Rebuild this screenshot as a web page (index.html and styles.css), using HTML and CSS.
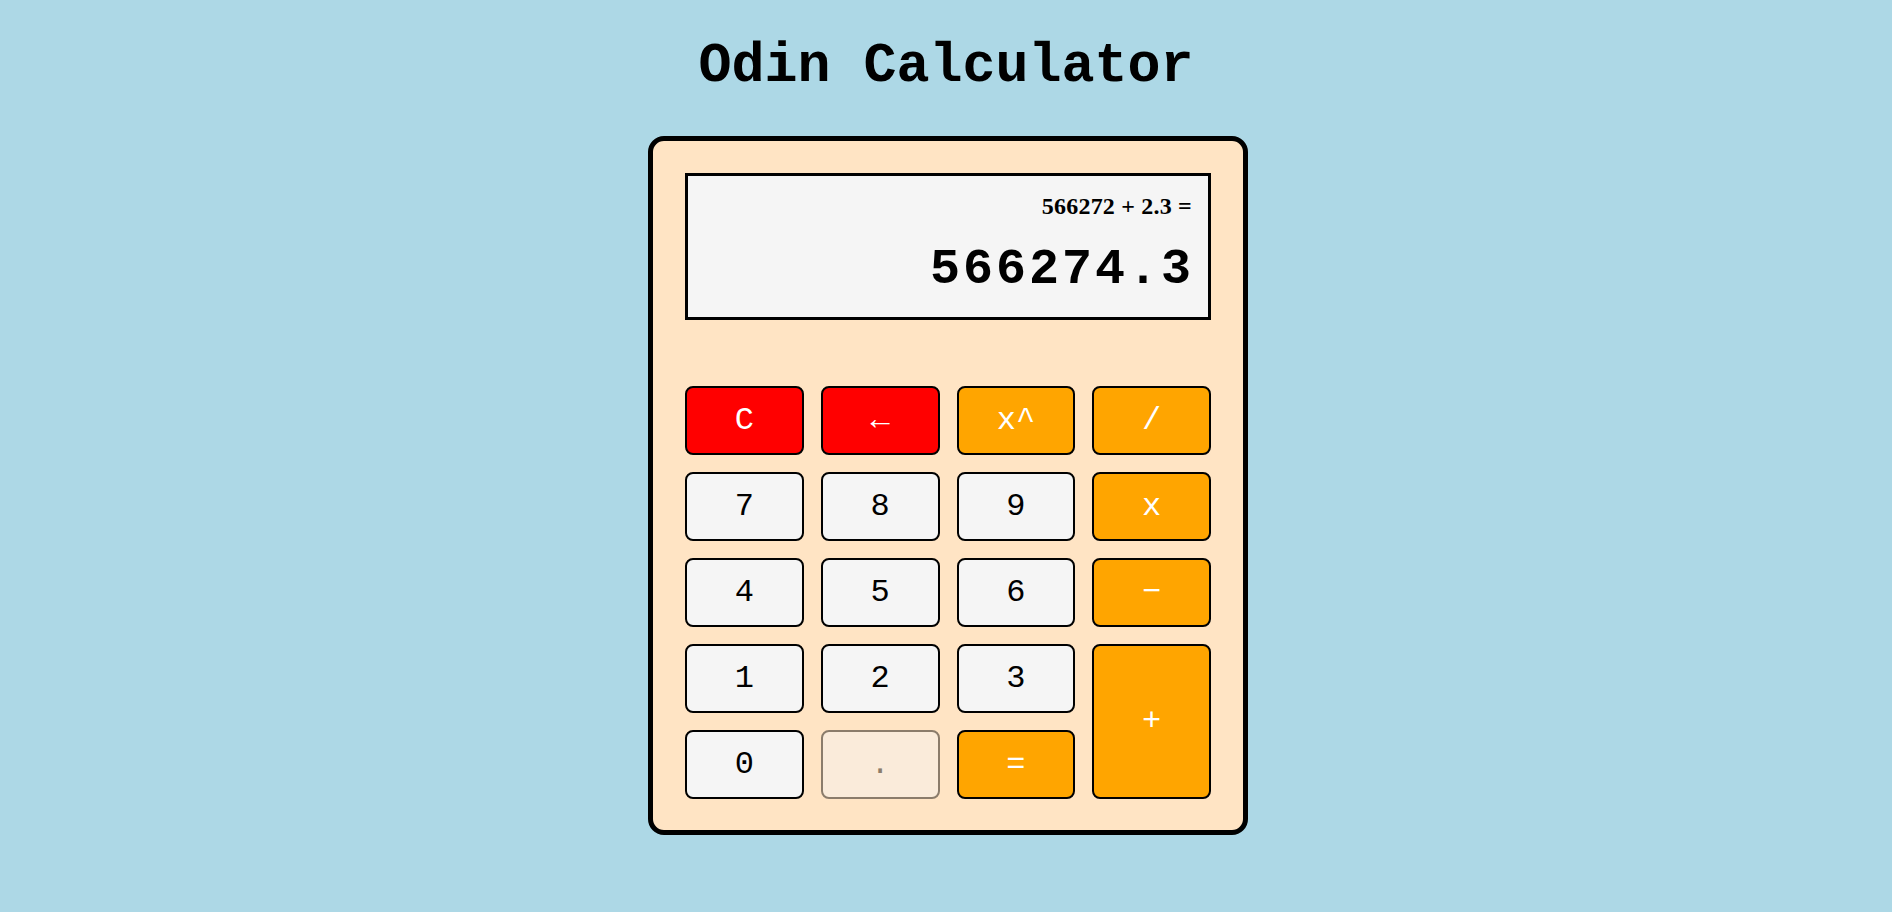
FILE: index.html
```html
<!DOCTYPE html>
<html lang="en">
<head>
<meta charset="utf-8">
<title>Odin Calculator</title>
<link rel="stylesheet" href="styles.css">
</head>
<body>
<h1 class="title">Odin Calculator</h1>
<div class="calculator">
  <div class="display">
    <div class="expression">566272 + 2.3 =</div>
    <div class="result">566274.3</div>
  </div>
  <div class="keys">
    <button class="key key-red">C</button>
    <button class="key key-red">&larr;</button>
    <button class="key key-op">x^</button>
    <button class="key key-op">/</button>
    <button class="key">7</button>
    <button class="key">8</button>
    <button class="key">9</button>
    <button class="key key-op">x</button>
    <button class="key">4</button>
    <button class="key">5</button>
    <button class="key">6</button>
    <button class="key key-op">&minus;</button>
    <button class="key">1</button>
    <button class="key">2</button>
    <button class="key">3</button>
    <button class="key key-op key-plus">+</button>
    <button class="key">0</button>
    <button class="key" disabled>.</button>
    <button class="key key-op">=</button>
  </div>
</div>
</body>
</html>
```
FILE: styles.css
```css
body {
  margin: 0;
  background: #add8e6;
  font-family: "Liberation Mono", monospace;
  color: #000;
}

.title {
  margin: 35px 0 37px;
  text-align: center;
  font-size: 55px;
  line-height: 64px;
  font-weight: bold;
}

.calculator {
  box-sizing: border-box;
  width: 600px;
  height: 699px;
  margin-left: calc(50% - 298px);
  padding: 32px;
  border: 5px solid #000;
  border-radius: 16px;
  background: #ffe4c4;
}

.display {
  box-sizing: border-box;
  height: 147px;
  border: 3px solid #000;
  background: #f5f5f5;
  padding: 16px 16px 0;
  text-align: right;
}

.expression {
  font-family: "Liberation Serif", serif;
  font-weight: bold;
  font-size: 24px;
  line-height: 28px;
  letter-spacing: 0.2px;
}

.result {
  margin-top: 25px;
  margin-right: -2px;
  font-size: 50px;
  line-height: 50px;
  font-weight: bold;
  letter-spacing: 3px;
}

.keys {
  display: grid;
  grid-template-columns: repeat(4, 1fr);
  grid-template-rows: repeat(5, 69px);
  gap: 17px;
  margin-top: 66px;
}

.key {
  border: 2px solid #000;
  border-radius: 8px;
  padding: 0;
  background: #f5f5f5;
  color: #000;
  font-family: "Liberation Mono", monospace;
  font-size: 32px;
}

.key-red {
  background: #ff0000;
  color: #fff;
}

.key-op {
  background: #ffa500;
  color: #fff;
}

.key-plus {
  grid-row: span 2;
}

.key:disabled {
  opacity: 0.45;
}
```
